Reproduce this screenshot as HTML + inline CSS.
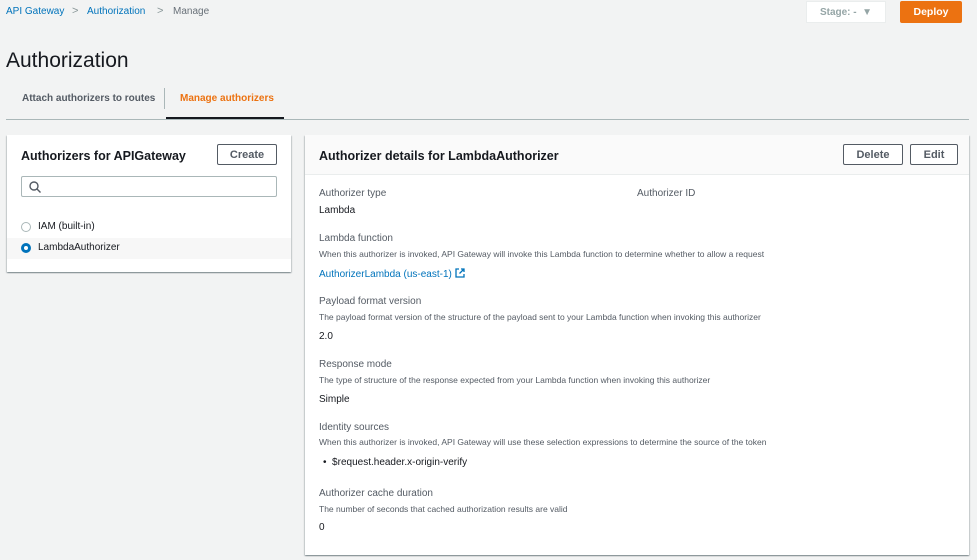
<!DOCTYPE html>
<html><head><meta charset="utf-8"><style>
*{box-sizing:border-box;margin:0;padding:0}
body{width:977px;height:560px;background:#f2f3f3;font-family:"Liberation Sans",Arial,sans-serif;color:#16191f;position:relative;overflow:hidden}
.a{position:absolute;white-space:nowrap}
.lnk{color:#0073bb}
.btn{position:absolute;border:1px solid #545b64;background:#fff;color:#545b64;font-weight:bold;font-size:11px;display:flex;align-items:center;justify-content:center;border-radius:2px}
.panel{position:absolute;background:#fff;box-shadow:0 1px 1px rgba(0,28,36,.3),1px 1px 1px rgba(0,28,36,.15),-1px 1px 1px rgba(0,28,36,.15)}
.lbl{font-size:10px;color:#545b64}
.desc{font-size:8.5px;color:#545b64}
.val{font-size:10px;color:#16191f}
</style></head><body>
<div class="a lnk" style="left:6px;top:6px;font-size:10px">API Gateway</div>
<div class="a" style="left:72px;top:5px;font-size:11px;color:#879596">&gt;</div>
<div class="a lnk" style="left:87px;top:6px;font-size:10px">Authorization</div>
<div class="a" style="left:157px;top:5px;font-size:11px;color:#879596">&gt;</div>
<div class="a" style="left:173px;top:6px;font-size:10px;color:#687078">Manage</div>
<div class="a" style="left:806px;top:1px;width:80px;height:22px;background:#fff;border:1px solid #eaeded;color:#95a5a6;font-size:10px;font-weight:bold;display:flex;align-items:center;justify-content:center">Stage: - &nbsp;▼</div>
<div class="a" style="left:900px;top:1px;width:62px;height:22px;background:#ec7211;color:#fff;font-size:10.5px;font-weight:bold;display:flex;align-items:center;justify-content:center;border-radius:2px">Deploy</div>
<div class="a" style="left:6px;top:49px;font-size:21px">Authorization</div>
<div class="a" style="left:22px;top:93px;font-size:10px;font-weight:bold;color:#545b64">Attach authorizers to routes</div>
<div class="a" style="left:164px;top:88px;width:1px;height:21px;background:#aab7b8"></div>
<div class="a" style="left:180px;top:93px;font-size:10px;font-weight:bold;color:#ec7211">Manage authorizers</div>
<div class="a" style="left:6px;top:119px;width:963px;height:1px;background:#aab7b8"></div>
<div class="a" style="left:166px;top:117px;width:118px;height:2px;background:#16191f"></div>

<div class="panel" style="left:7px;top:135px;width:284px;height:137px">
 <div class="a" style="left:14px;top:14px;font-size:12.5px;font-weight:bold">Authorizers for APIGateway</div>
 <div class="btn" style="left:210px;top:9px;width:60px;height:21px">Create</div>
 <div class="a" style="left:14px;top:41px;width:256px;height:21px;border:1px solid #aab7b8;border-radius:2px"><svg width="14" height="14" style="position:absolute;left:6px;top:3px" viewBox="0 0 14 14"><circle cx="6" cy="6" r="4" fill="none" stroke="#545b64" stroke-width="1.4"/><path d="M9 9l3.5 3.5" stroke="#545b64" stroke-width="1.4"/></svg></div>
 <div class="a" style="left:0;top:103px;width:284px;height:21px;background:#f7f7f7"></div>
 <div class="a" style="left:14px;top:87px;width:10px;height:10px;border:1px solid #aab7b8;border-radius:50%"></div>
 <div class="a" style="left:31px;top:86px;font-size:10px">IAM (built-in)</div>
 <div class="a" style="left:14px;top:108px;width:10px;height:10px;border:3px solid #0073bb;border-radius:50%;background:#fff"></div>
 <div class="a" style="left:31px;top:107px;font-size:10px">LambdaAuthorizer</div>
</div>

<div class="panel" style="left:305px;top:135px;width:664px;height:420px">
 <div class="a" style="left:0;top:0;width:664px;height:40px;background:#fafafa;border-bottom:1px solid #eaeded"></div>
 <div class="a" style="left:14px;top:14px;font-size:12.5px;font-weight:bold">Authorizer details for LambdaAuthorizer</div>
 <div class="btn" style="left:538px;top:9px;width:60px;height:21px">Delete</div>
 <div class="btn" style="left:605px;top:9px;width:48px;height:21px">Edit</div>
 <div class="a lbl" style="left:14px;top:53px">Authorizer type</div>
 <div class="a lbl" style="left:332px;top:53px">Authorizer ID</div>
 <div class="a val" style="left:14px;top:70px">Lambda</div>
 <div class="a lbl" style="left:14px;top:98px">Lambda function</div>
 <div class="a desc" style="left:14px;top:114px">When this authorizer is invoked, API Gateway will invoke this Lambda function to determine whether to allow a request</div>
 <div class="a lnk" style="left:14px;top:133px;font-size:10px">AuthorizerLambda (us-east-1) <svg width="10" height="10" viewBox="0 0 10 10" style="vertical-align:-1px"><path d="M4 1H1v8h8V6M6 1h3v3M9 1L4.5 5.5" fill="none" stroke="#0073bb" stroke-width="1.3"/></svg></div>
 <div class="a lbl" style="left:14px;top:161px">Payload format version</div>
 <div class="a desc" style="left:14px;top:177px">The payload format version of the structure of the payload sent to your Lambda function when invoking this authorizer</div>
 <div class="a val" style="left:14px;top:196px">2.0</div>
 <div class="a lbl" style="left:14px;top:224px">Response mode</div>
 <div class="a desc" style="left:14px;top:240px">The type of structure of the response expected from your Lambda function when invoking this authorizer</div>
 <div class="a val" style="left:14px;top:259px">Simple</div>
 <div class="a lbl" style="left:14px;top:287px">Identity sources</div>
 <div class="a desc" style="left:14px;top:302px">When this authorizer is invoked, API Gateway will use these selection expressions to determine the source of the token</div>
 <div class="a val" style="left:18px;top:322px">•&nbsp;&nbsp;$request.header.x-origin-verify</div>
 <div class="a lbl" style="left:14px;top:353px">Authorizer cache duration</div>
 <div class="a desc" style="left:14px;top:369px">The number of seconds that cached authorization results are valid</div>
 <div class="a val" style="left:14px;top:387px">0</div>
</div>
</body></html>
